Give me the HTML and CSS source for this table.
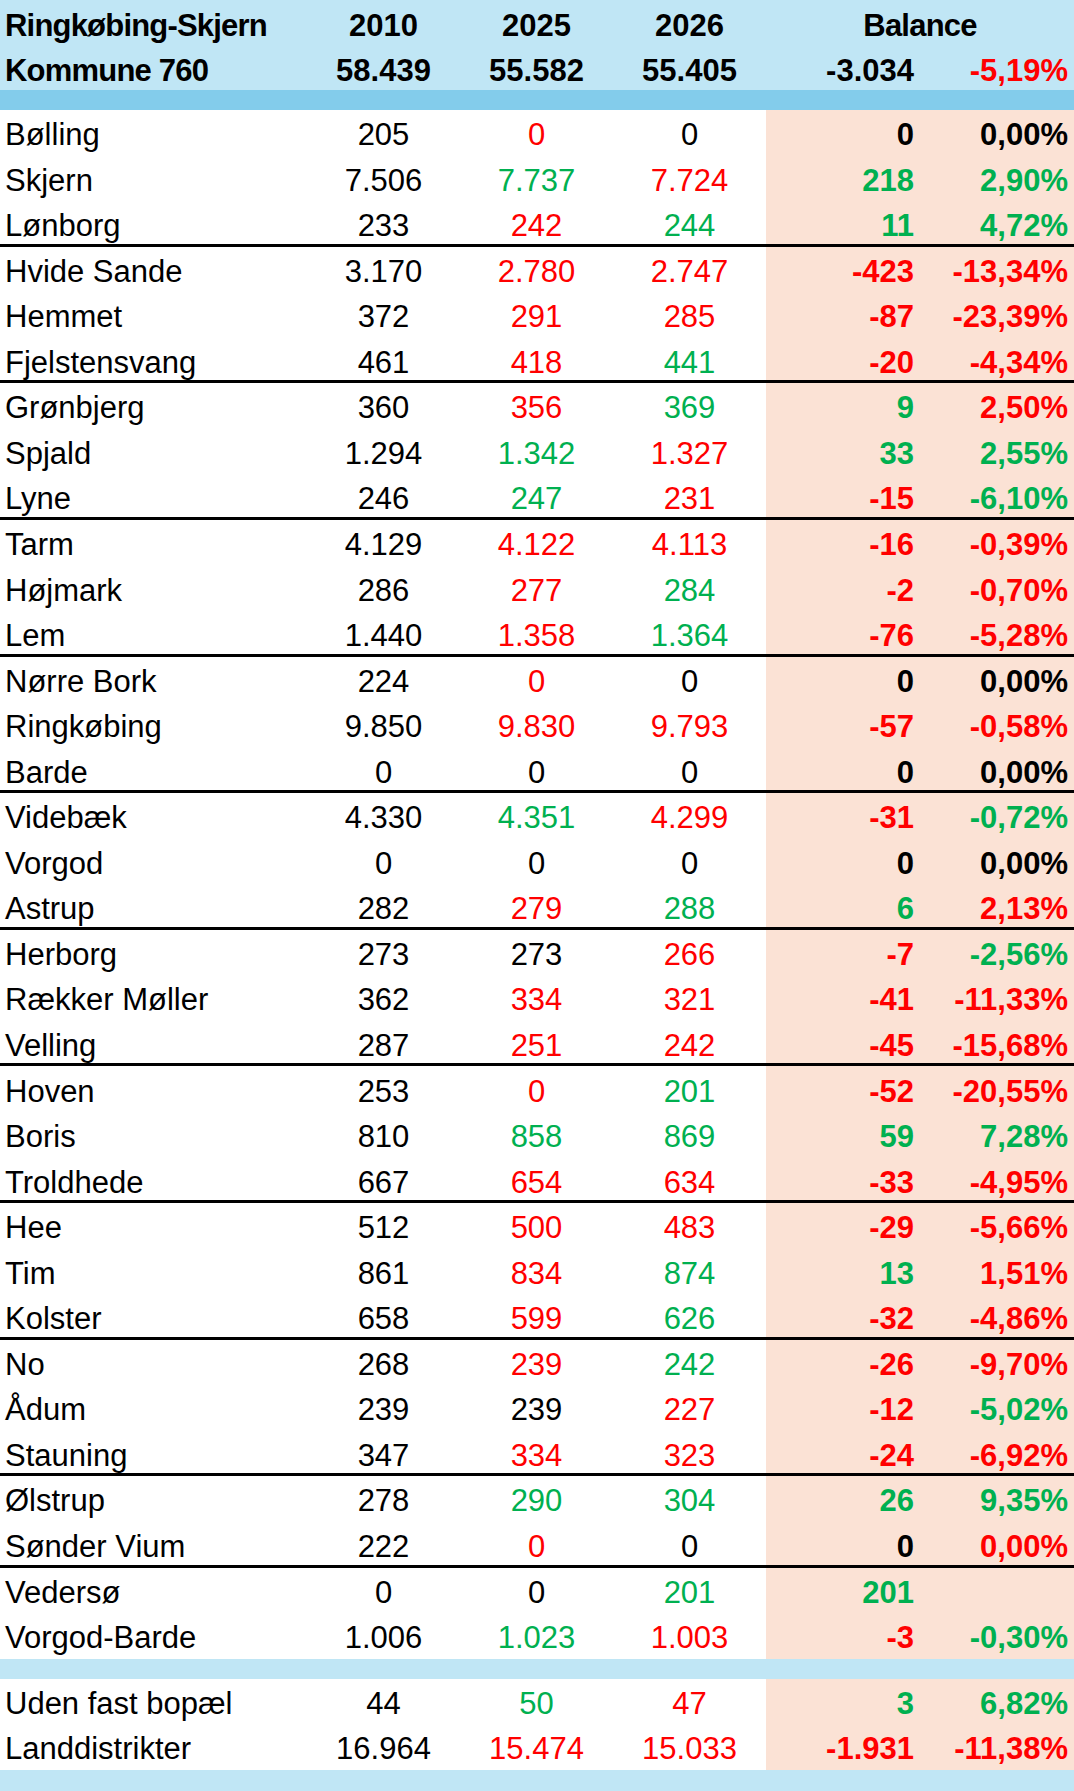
FILE: index.html
```html
<!DOCTYPE html>
<html lang="da">
<head>
<meta charset="utf-8">
<title>Ringkøbing-Skjern Kommune 760</title>
<link rel="stylesheet" href="styles.css">
</head>
<body>
<div class="sheet">
  <div class="row head">
    <div class="c name">Ringkøbing-Skjern</div>
    <div class="c num">2010</div>
    <div class="c num">2025</div>
    <div class="c num">2026</div>
    <div class="c span2">Balance</div>
  </div>
  <div class="row head">
    <div class="c name">Kommune 760</div>
    <div class="c num">58.439</div>
    <div class="c num">55.582</div>
    <div class="c num">55.405</div>
    <div class="c bal">-3.034</div>
    <div class="c pct r">-5,19%</div>
  </div>
  <div class="bar dark"></div>

  <div class="row">
    <div class="c name">Bølling</div><div class="c num">205</div><div class="c num r">0</div><div class="c num">0</div><div class="c bal">0</div><div class="c pct">0,00%</div>
  </div>
  <div class="row">
    <div class="c name">Skjern</div><div class="c num">7.506</div><div class="c num g">7.737</div><div class="c num r">7.724</div><div class="c bal g">218</div><div class="c pct g">2,90%</div>
  </div>
  <div class="row sep">
    <div class="c name">Lønborg</div><div class="c num">233</div><div class="c num r">242</div><div class="c num g">244</div><div class="c bal g">11</div><div class="c pct g">4,72%</div>
  </div>

  <div class="row">
    <div class="c name">Hvide Sande</div><div class="c num">3.170</div><div class="c num r">2.780</div><div class="c num r">2.747</div><div class="c bal r">-423</div><div class="c pct r">-13,34%</div>
  </div>
  <div class="row">
    <div class="c name">Hemmet</div><div class="c num">372</div><div class="c num r">291</div><div class="c num r">285</div><div class="c bal r">-87</div><div class="c pct r">-23,39%</div>
  </div>
  <div class="row sep">
    <div class="c name">Fjelstensvang</div><div class="c num">461</div><div class="c num r">418</div><div class="c num g">441</div><div class="c bal r">-20</div><div class="c pct r">-4,34%</div>
  </div>

  <div class="row">
    <div class="c name">Grønbjerg</div><div class="c num">360</div><div class="c num r">356</div><div class="c num g">369</div><div class="c bal g">9</div><div class="c pct r">2,50%</div>
  </div>
  <div class="row">
    <div class="c name">Spjald</div><div class="c num">1.294</div><div class="c num g">1.342</div><div class="c num r">1.327</div><div class="c bal g">33</div><div class="c pct g">2,55%</div>
  </div>
  <div class="row sep">
    <div class="c name">Lyne</div><div class="c num">246</div><div class="c num g">247</div><div class="c num r">231</div><div class="c bal r">-15</div><div class="c pct g">-6,10%</div>
  </div>

  <div class="row">
    <div class="c name">Tarm</div><div class="c num">4.129</div><div class="c num r">4.122</div><div class="c num r">4.113</div><div class="c bal r">-16</div><div class="c pct r">-0,39%</div>
  </div>
  <div class="row">
    <div class="c name">Højmark</div><div class="c num">286</div><div class="c num r">277</div><div class="c num g">284</div><div class="c bal r">-2</div><div class="c pct r">-0,70%</div>
  </div>
  <div class="row sep">
    <div class="c name">Lem</div><div class="c num">1.440</div><div class="c num r">1.358</div><div class="c num g">1.364</div><div class="c bal r">-76</div><div class="c pct r">-5,28%</div>
  </div>

  <div class="row">
    <div class="c name">Nørre Bork</div><div class="c num">224</div><div class="c num r">0</div><div class="c num">0</div><div class="c bal">0</div><div class="c pct">0,00%</div>
  </div>
  <div class="row">
    <div class="c name">Ringkøbing</div><div class="c num">9.850</div><div class="c num r">9.830</div><div class="c num r">9.793</div><div class="c bal r">-57</div><div class="c pct r">-0,58%</div>
  </div>
  <div class="row sep">
    <div class="c name">Barde</div><div class="c num">0</div><div class="c num">0</div><div class="c num">0</div><div class="c bal">0</div><div class="c pct">0,00%</div>
  </div>

  <div class="row">
    <div class="c name">Videbæk</div><div class="c num">4.330</div><div class="c num g">4.351</div><div class="c num r">4.299</div><div class="c bal r">-31</div><div class="c pct g">-0,72%</div>
  </div>
  <div class="row">
    <div class="c name">Vorgod</div><div class="c num">0</div><div class="c num">0</div><div class="c num">0</div><div class="c bal">0</div><div class="c pct">0,00%</div>
  </div>
  <div class="row sep">
    <div class="c name">Astrup</div><div class="c num">282</div><div class="c num r">279</div><div class="c num g">288</div><div class="c bal g">6</div><div class="c pct r">2,13%</div>
  </div>

  <div class="row">
    <div class="c name">Herborg</div><div class="c num">273</div><div class="c num">273</div><div class="c num r">266</div><div class="c bal r">-7</div><div class="c pct g">-2,56%</div>
  </div>
  <div class="row">
    <div class="c name">Rækker Møller</div><div class="c num">362</div><div class="c num r">334</div><div class="c num r">321</div><div class="c bal r">-41</div><div class="c pct r">-11,33%</div>
  </div>
  <div class="row sep">
    <div class="c name">Velling</div><div class="c num">287</div><div class="c num r">251</div><div class="c num r">242</div><div class="c bal r">-45</div><div class="c pct r">-15,68%</div>
  </div>

  <div class="row">
    <div class="c name">Hoven</div><div class="c num">253</div><div class="c num r">0</div><div class="c num g">201</div><div class="c bal r">-52</div><div class="c pct r">-20,55%</div>
  </div>
  <div class="row">
    <div class="c name">Boris</div><div class="c num">810</div><div class="c num g">858</div><div class="c num g">869</div><div class="c bal g">59</div><div class="c pct g">7,28%</div>
  </div>
  <div class="row sep">
    <div class="c name">Troldhede</div><div class="c num">667</div><div class="c num r">654</div><div class="c num r">634</div><div class="c bal r">-33</div><div class="c pct r">-4,95%</div>
  </div>

  <div class="row">
    <div class="c name">Hee</div><div class="c num">512</div><div class="c num r">500</div><div class="c num r">483</div><div class="c bal r">-29</div><div class="c pct r">-5,66%</div>
  </div>
  <div class="row">
    <div class="c name">Tim</div><div class="c num">861</div><div class="c num r">834</div><div class="c num g">874</div><div class="c bal g">13</div><div class="c pct r">1,51%</div>
  </div>
  <div class="row sep">
    <div class="c name">Kolster</div><div class="c num">658</div><div class="c num r">599</div><div class="c num g">626</div><div class="c bal r">-32</div><div class="c pct r">-4,86%</div>
  </div>

  <div class="row">
    <div class="c name">No</div><div class="c num">268</div><div class="c num r">239</div><div class="c num g">242</div><div class="c bal r">-26</div><div class="c pct r">-9,70%</div>
  </div>
  <div class="row">
    <div class="c name">Ådum</div><div class="c num">239</div><div class="c num">239</div><div class="c num r">227</div><div class="c bal r">-12</div><div class="c pct g">-5,02%</div>
  </div>
  <div class="row sep">
    <div class="c name">Stauning</div><div class="c num">347</div><div class="c num r">334</div><div class="c num r">323</div><div class="c bal r">-24</div><div class="c pct r">-6,92%</div>
  </div>

  <div class="row">
    <div class="c name">Ølstrup</div><div class="c num">278</div><div class="c num g">290</div><div class="c num g">304</div><div class="c bal g">26</div><div class="c pct g">9,35%</div>
  </div>
  <div class="row sep">
    <div class="c name">Sønder Vium</div><div class="c num">222</div><div class="c num r">0</div><div class="c num">0</div><div class="c bal">0</div><div class="c pct r">0,00%</div>
  </div>

  <div class="row">
    <div class="c name">Vedersø</div><div class="c num">0</div><div class="c num">0</div><div class="c num g">201</div><div class="c bal g">201</div><div class="c pct"></div>
  </div>
  <div class="row">
    <div class="c name">Vorgod-Barde</div><div class="c num">1.006</div><div class="c num g">1.023</div><div class="c num r">1.003</div><div class="c bal r">-3</div><div class="c pct g">-0,30%</div>
  </div>

  <div class="bar light"></div>

  <div class="row foot">
    <div class="c name">Uden fast bopæl</div><div class="c num">44</div><div class="c num g">50</div><div class="c num r">47</div><div class="c bal g">3</div><div class="c pct g">6,82%</div>
  </div>
  <div class="row foot">
    <div class="c name">Landdistrikter</div><div class="c num">16.964</div><div class="c num r">15.474</div><div class="c num r">15.033</div><div class="c bal r">-1.931</div><div class="c pct r">-11,38%</div>
  </div>

  <div class="bar light end"></div>
</div>
</body>
</html>
```

FILE: styles.css
```css
html, body {
  margin: 0;
  padding: 0;
  background: #ffffff;
}

.sheet {
  width: 1074px;
  font-family: "Liberation Sans", Arial, sans-serif;
  font-size: 31px;
  line-height: 31px;
  color: #000000;
}

.row {
  display: grid;
  grid-template-columns: 307px 153px 153px 153px 154px 154px;
  height: 45.56px;
}

.row.head {
  height: 45px;
  background: #c0e6f5;
  font-weight: bold;
}

.row.foot {
  height: 45.5px;
}

.c {
  display: flex;
  align-items: flex-end;
  padding-bottom: 5.5px;
  box-sizing: border-box;
  white-space: nowrap;
}

.row.head .c {
  padding-bottom: 4px;
}

.row.head .name,
.row.head .span2 {
  letter-spacing: -0.8px;
}

.name {
  padding-left: 5px;
}

.num {
  justify-content: center;
}

.bal,
.pct {
  justify-content: flex-end;
  padding-right: 6px;
  font-weight: bold;
}

.row:not(.head) .bal,
.row:not(.head) .pct {
  background: #fbe2d5;
}

.span2 {
  grid-column: span 2;
  justify-content: center;
}

.row.sep .c {
  box-shadow: inset 0 -3px 0 #000000;
}

.g {
  color: #00b050;
}

.r {
  color: #ff0000;
}

.bar {
  height: 20px;
}

.bar.dark {
  background: #83cceb;
}

.bar.light {
  background: #c0e6f5;
}

.bar.end {
  height: 21px;
}
```
